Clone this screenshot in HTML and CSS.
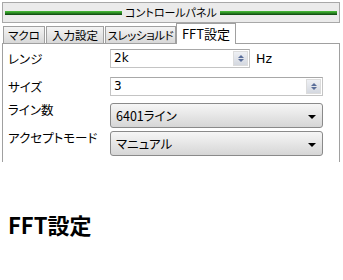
FILE: index.html
```html
<!DOCTYPE html>
<html lang="ja">
<head>
    <meta charset="UTF-8">
    <meta name="viewport" content="width=device-width, initial-scale=1.0">
    <title>コントロールパネル</title>
    <link rel="stylesheet" href="styles.css">
</head>
<body>
    <div class="panel">
        <div class="titlebar">
            <span class="rule"></span>
            <span class="title">コントロールパネル</span>
            <span class="rule"></span>
        </div>

        <div class="tabs">
            <div class="tab t1">マクロ</div>
            <div class="tab t2">入力設定</div>
            <div class="tab t3">スレッショルド</div>
            <div class="tab t4 active">FFT設定</div>
        </div>

        <div class="page">
            <div class="row">
                <label class="lbl">レンジ</label>
                <div class="ctl">
                    <div class="spin short">
                        <span class="val">2k</span>
                        <span class="arrows"><i class="up"></i><i class="dn"></i></span>
                    </div>
                    <span class="unit">Hz</span>
                </div>
            </div>
            <div class="row">
                <label class="lbl">サイズ</label>
                <div class="ctl">
                    <div class="spin">
                        <span class="val">3</span>
                        <span class="arrows"><i class="up"></i><i class="dn"></i></span>
                    </div>
                </div>
            </div>
            <div class="row sel-row">
                <label class="lbl">ライン数</label>
                <div class="ctl">
                    <div class="select"><span>6401ライン</span><i class="caret"></i></div>
                </div>
            </div>
            <div class="row sel-row">
                <label class="lbl">アクセプトモード</label>
                <div class="ctl">
                    <div class="select"><span>マニュアル</span><i class="caret"></i></div>
                </div>
            </div>
        </div>
    </div>

    <h2 class="heading">FFT設定</h2>
</body>
</html>
```

FILE: styles.css
```css
body {
    margin: 0;
    padding: 2px;
    background: #fff;
    color: #000;
    font-family: "Noto Sans CJK JP", "Liberation Sans", sans-serif;
    font-size: 12px;
    font-feature-settings: "palt";
}

.panel {
    width: 338px;
}

/* タイトルバー */
.titlebar {
    height: 19px;
    border: 1px solid #a8a8a8;
    background: #ebebeb;
    display: flex;
    align-items: center;
    padding: 0 2px;
    gap: 3px;
}

.rule {
    flex-grow: 1;
    height: 4px;
    background: linear-gradient(#4cc23c, #2a8a22 50%, #0f3f12);
}

.title {
    font-size: 11px;
    line-height: 1;
}

/* タブ */
.tabs {
    display: flex;
    align-items: flex-end;
    height: 20px;
    padding-left: 1px;
    gap: 1px;
}

.tab {
    height: 16px;
    line-height: 16px;
    text-align: center;
    white-space: nowrap;
    font-size: 11.5px;
    border: 1px solid #a0a0a0;
    border-bottom: none;
    background: linear-gradient(#f4f4f4, #d8d8d8);
    position: relative;
}

.t1 { width: 40px; }
.t2 { width: 56px; }
.t3 { width: 69px; margin-right: -1px; letter-spacing: -0.4px; }
.t4 { width: 58px; }

.tab.active {
    height: 20px;
    line-height: 19px;
    background: #fff;
    margin-bottom: -1px;
    font-size: 13px;
    z-index: 1;
}

/* 設定ページ */
.page {
    border: 1px solid #a0a0a0;
    border-bottom: none;
    height: 118px;
    padding: 0 16px 0 5px;
}

.row {
    display: grid;
    grid-template-columns: 102px 1fr;
    align-items: center;
    height: 28px;
}

.sel-row {
    align-items: start;
}

.sel-row .lbl {
    line-height: 18px;
    padding-top: 1px;
}

.sel-row .ctl {
    padding-top: 3px;
}

.lbl {
    font-size: 12.5px;
}

.ctl {
    display: flex;
    align-items: center;
    gap: 6px;
}

.spin {
    flex-grow: 1;
    height: 17px;
    border: 1px solid #c4c4c4;
    border-top-color: #a8a8a8;
    display: flex;
    align-items: center;
    justify-content: space-between;
    padding-left: 3px;
}

.spin.short {
    flex-grow: 0;
    width: 135px;
}

.val {
    font-family: "DejaVu Sans", sans-serif;
    font-size: 12px;
}

.arrows {
    width: 15px;
    height: 15px;
    margin-right: 1px;
    background: linear-gradient(#eef0f4, #d4d8e0);
    border: 1px solid #dcdcdc;
    box-sizing: border-box;
    display: flex;
    flex-direction: column;
    align-items: center;
    justify-content: center;
    gap: 1px;
}

.arrows i {
    width: 0;
    height: 0;
    border-left: 3px solid transparent;
    border-right: 3px solid transparent;
}

.arrows .up { border-bottom: 3px solid #5a6e9a; }
.arrows .dn { border-top: 3px solid #5a6e9a; }

.unit {
    font-family: "DejaVu Sans", sans-serif;
    font-size: 12.5px;
}

.select {
    flex-grow: 1;
    height: 23px;
    border: 1px solid #8a8a8a;
    border-radius: 3px;
    background: linear-gradient(#f6f6f6, #e6e6e6 50%, #d6d6d6);
    display: flex;
    align-items: center;
    justify-content: space-between;
    padding: 0 6px 0 5px;
    font-size: 12.5px;
}

.caret {
    width: 0;
    height: 0;
    border-left: 4px solid transparent;
    border-right: 4px solid transparent;
    border-top: 4px solid #000;
    margin-top: 3px;
}

.heading {
    margin: 51px 0 0 6px;
    font-size: 22px;
    font-weight: bold;
    line-height: 1;
}
```
